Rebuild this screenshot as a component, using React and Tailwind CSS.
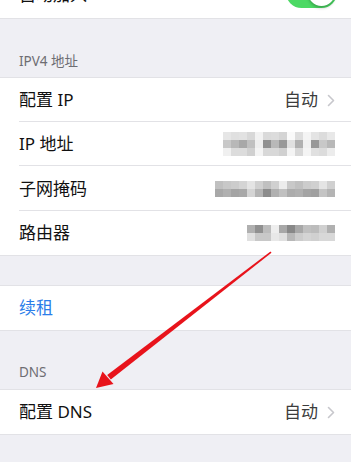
import React from "react";

const ipBlur = [
  ["#e6e6e6","#e0e0e0","#e2e2e2","#d8d8d8","#f2f2f2","#dadada","#dcdcdc","#d4d4d4","#fafafa","#dedede","#f4f4f4","#e4e4e4","#dcdcdc","#e8e8e8"],
  ["#c8c8c8","#b8b8b8","#a8a8a8","#c0c0c0","#eeeeee","#909090","#b8b8b8","#989898","#e0e0e0","#b0b0b0","#f0f0f0","#989898","#c8c8c8","#b8b8b8"],
  ["#f0f0f0","#dcdcdc","#dcdcdc","#d0d0d0","#f4f4f4","#d8d8d8","#d8d8d8","#d0d0d0","#f4f4f4","#d8d8d8","#f4f4f4","#e0e0e0","#dcdcdc","#ececec"],
];
const maskBlur = [
  ["#c0c0c0","#c8c8c8","#cccccc","#d4d4d4","#e4e4e4","#d0d0d0","#c0c0c0","#d0d0d0","#ececec","#c8c8c8","#c0c0c0","#cccccc","#d0d0d0","#e4e4e4","#d0d0d0"],
  ["#a8a8a8","#b0b0b0","#a4a4a4","#a8a8a8","#d4d4d4","#b4b4b4","#8c8c8c","#b0b0b0","#c0c0c0","#acacac","#b0b0b0","#a4a4a4","#a0a0a0","#c4c4c4","#b4b4b4"],
];
const routerBlur = [
  ["#b0b0b0","#909090","#bcbcbc","#eeeeee","#a8a8a8","#888888","#a8a8a8","#c0c0c0","#bcbcbc","#d0d0d0","#b0b0b0"],
  ["#e0e0e0","#c8c8c8","#c8c8c8","#e8e8e8","#e0e0e0","#b8b8b8","#cccccc","#d4d4d4","#d0d0d0","#d8d8d8","#d8d8d8"],
];

function Blur({ data }) {
  return (
    <div className="flex flex-col">
      {data.map((row, i) => (
        <div key={i} className="flex">
          {row.map((c, j) => (
            <div key={j} className="w-[8px] h-[8px]" style={{ backgroundColor: c }} />
          ))}
        </div>
      ))}
    </div>
  );
}

function Chevron() {
  return (
    <svg width="8" height="13" viewBox="0 0 8 13" className="ml-[9px]">
      <path d="M1.5 1.5 L6.5 6.5 L1.5 11.5" fill="none" stroke="#c7c7cc" strokeWidth="1.6" strokeLinecap="round" strokeLinejoin="round" />
    </svg>
  );
}

function Row({ label, right, sep = true, h = "h-[44px]", labelClass = "text-[#111]" }) {
  return (
    <div className={`relative flex items-center ${h} pl-[19px] pr-[16px]`}>
      <span className={`text-[17px] ${labelClass}`}>{label}</span>
      <div className="ml-auto flex items-center">{right}</div>
      {sep && <div className="absolute left-[19px] right-0 bottom-0 h-px bg-[#e2e2e6]" />}
    </div>
  );
}

export default function App() {
  return (
    <div
      className="relative w-[351px] h-[462px] overflow-hidden bg-[#efeff4]"
      style={{ fontFamily: '"Noto Sans", "Noto Sans CJK SC", sans-serif' }}
    >
      {/* top cut row */}
      <div className="bg-white h-[19px] overflow-hidden border-b border-[#e2e2e6]">
        <div className="flex items-center h-[46px] -mt-[28px] pl-[19px] pr-[16px]">
          <span className="text-[17px] text-[#111]">自动加入</span>
          <div className="ml-auto relative w-[51px] h-[31px] rounded-full bg-[#4cd964] -mt-[5px] -mr-[2px]">
            <div className="absolute right-[2px] top-[2px] w-[27px] h-[27px] rounded-full bg-white shadow-[0_2px_3px_rgba(0,0,0,0.25)]" />
          </div>
        </div>
      </div>

      {/* IPV4 header */}
      <div className="h-[58px] flex items-end pl-[19px] pb-[6px]">
        <span className="text-[13.5px] text-[#6d6d72]">IPV4 地址</span>
      </div>

      <div className="bg-white border-t border-b border-[#e2e2e6]">
        <Row
          label="配置 IP"
          right={
            <>
              <span className="text-[17px] text-[#3c3c3c]">自动</span>
              <Chevron />
            </>
          }
        />
        <Row label="IP 地址" right={<Blur data={ipBlur} />} />
        <Row label="子网掩码" h="h-[45px]" right={<Blur data={maskBlur} />} />
        <Row label="路由器" sep={false} right={<Blur data={routerBlur} />} />
      </div>

      <div className="h-[29px]" />

      <div className="bg-white border-t border-b border-[#e2e2e6]">
        <Row label="续租" sep={false} labelClass="text-[#2b7de9]" />
      </div>

      <div className="h-[58px] flex items-end pl-[19px] pb-[7px]">
        <span className="text-[13.5px] text-[#6d6d72]">DNS</span>
      </div>

      <div className="bg-white border-t border-b border-[#e2e2e6]">
        <Row
          label="配置 DNS"
          sep={false}
          right={
            <>
              <span className="text-[17px] text-[#3c3c3c]">自动</span>
              <Chevron />
            </>
          }
        />
      </div>

      {/* red annotation arrow */}
      <svg className="absolute left-0 top-0 pointer-events-none" width="351" height="462" viewBox="0 0 351 462">
        <polygon points="270.5,251.5 271.5,252.8 110.8,379.5 107.2,374.9" fill="#e8131b" />
        <polygon points="96,388 102.5,371.5 113.5,384" fill="#e8131b" />
      </svg>
    </div>
  );
}
